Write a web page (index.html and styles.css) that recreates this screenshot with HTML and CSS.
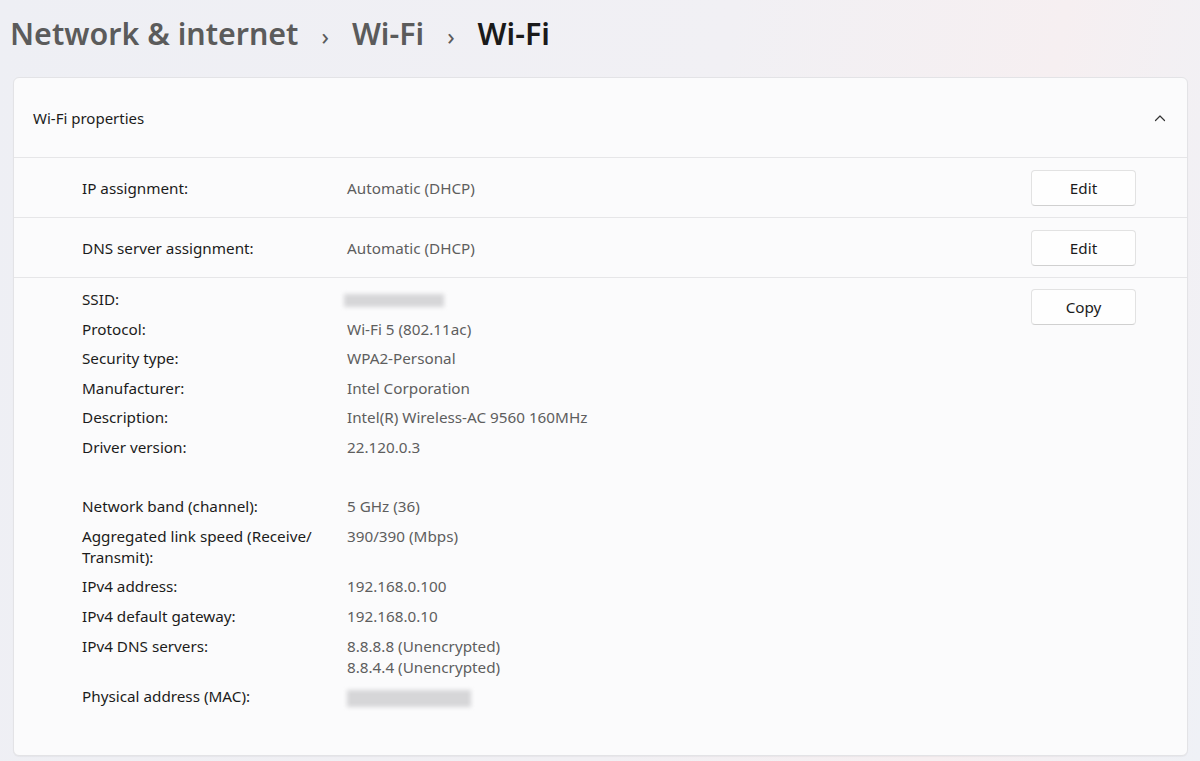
FILE: index.html
```html
<!DOCTYPE html>
<html lang="en">
<head>
  <meta charset="UTF-8">
  <title>Wi-Fi</title>
  <link rel="stylesheet" href="styles.css">
</head>
<body>
  <div class="page">
    <h1 class="crumbs">
      <span>Network &amp; internet</span>
      <span class="sep">›</span>
      <span>Wi-Fi</span>
      <span class="sep">›</span>
      <span class="current">Wi-Fi</span>
    </h1>

    <div class="card">
      <div class="card-head">
        <span>Wi-Fi properties</span>
        <svg class="chev" width="14" height="14" viewBox="0 0 14 14"><path d="M2.5 9.5 L7 5 L11.5 9.5" fill="none" stroke="#333" stroke-width="1.2" stroke-linecap="round" stroke-linejoin="round"/></svg>
      </div>

      <div class="row">
        <div class="label">IP assignment:</div>
        <div class="value">Automatic (DHCP)</div>
        <button class="btn">Edit</button>
      </div>

      <div class="row">
        <div class="label">DNS server assignment:</div>
        <div class="value">Automatic (DHCP)</div>
        <button class="btn">Edit</button>
      </div>

      <div class="details">
        <div class="props">
          <div class="label">SSID:</div>
          <div class="value"><span class="blur ssid"></span></div>
          <div class="label">Protocol:</div>
          <div class="value">Wi-Fi 5 (802.11ac)</div>
          <div class="label">Security type:</div>
          <div class="value">WPA2-Personal</div>
          <div class="label">Manufacturer:</div>
          <div class="value">Intel Corporation</div>
          <div class="label">Description:</div>
          <div class="value">Intel(R) Wireless-AC 9560 160MHz</div>
          <div class="label">Driver version:</div>
          <div class="value">22.120.0.3</div>
          <div class="label spacer"></div>
          <div class="value spacer"></div>
          <div class="label">Network band (channel):</div>
          <div class="value">5 GHz (36)</div>
          <div class="label">Aggregated link speed (Receive/ Transmit):</div>
          <div class="value">390/390 (Mbps)</div>
          <div class="label">IPv4 address:</div>
          <div class="value">192.168.0.100</div>
          <div class="label">IPv4 default gateway:</div>
          <div class="value">192.168.0.10</div>
          <div class="label">IPv4 DNS servers:</div>
          <div class="value">8.8.8.8 (Unencrypted)<br>8.8.4.4 (Unencrypted)</div>
          <div class="label">Physical address (MAC):</div>
          <div class="value"><span class="blur mac"></span></div>
        </div>
        <button class="btn">Copy</button>
      </div>
    </div>
  </div>
</body>
</html>
```

FILE: styles.css
```css
body {
  margin: 0;
  font-family: "Noto Sans", "Open Sans", sans-serif;
  background: linear-gradient(100deg, #eeeff4 0%, #f1f0f4 55%, #f6eff1 80%, #eff1f6 100%);
  color: #1b1b1b;
  overflow: hidden;
}
.page {
  height: 761px;
  padding: 0 12px 0 13px;
  box-sizing: border-box;
}
.crumbs {
  margin: 0;
  padding: 13px 0 0 0;
  margin-left: -3px;
  height: 77px;
  box-sizing: border-box;
  font-size: 30.4px;
  font-weight: 600;
  color: #5b5b5b;
  display: flex;
  align-items: baseline;
  gap: 23px;
}
.crumbs .sep {
  font-size: 24px;
  font-weight: 400;
  color: #5b5b5b;
}
.crumbs .current {
  color: #1a1a1a;
}
.card {
  background: #fbfbfc;
  border: 1px solid #e3e3e6;
  border-radius: 6px;
  height: 679px;
  box-sizing: border-box;
  box-shadow: 0 1px 1px rgba(0, 0, 0, 0.04);
}
.card-head {
  height: 79px;
  display: flex;
  align-items: center;
  justify-content: space-between;
  padding: 0 20px 0 19px;
  font-size: 15px;
  border-bottom: 1px solid #e6e6e8;
}
.chev {
  display: block;
}
.row {
  height: 59px;
  display: flex;
  align-items: center;
  padding: 0 51px 0 68px;
  border-bottom: 1px solid #e6e6e8;
  font-size: 15.25px;
}
.row .label {
  width: 265px;
}
.row .value {
  flex: 1;
  color: #5e5e5e;
}
.btn {
  width: 105px;
  height: 36px;
  background: #fefefe;
  border: 1px solid #e2e2e2;
  border-bottom-color: #d0d0d0;
  border-radius: 4px;
  font-family: inherit;
  font-size: 15.25px;
  color: #1b1b1b;
  padding: 0;
}
.details {
  display: flex;
  align-items: flex-start;
  padding: 11px 51px 0 68px;
}
.props {
  flex: 1;
  display: grid;
  grid-template-columns: 245px 1fr;
  column-gap: 20px;
  row-gap: 8.6px;
  font-size: 15.25px;
  line-height: 21px;
}
.props .value {
  color: #5e5e5e;
}
.spacer {
  height: 21px;
}
.blur {
  display: inline-block;
  background: #d6d6d8;
  filter: blur(2px);
  vertical-align: middle;
}
.ssid {
  width: 100px;
  height: 13px;
  margin-left: -3px;
}
.mac {
  width: 124px;
  height: 17px;
}
```
